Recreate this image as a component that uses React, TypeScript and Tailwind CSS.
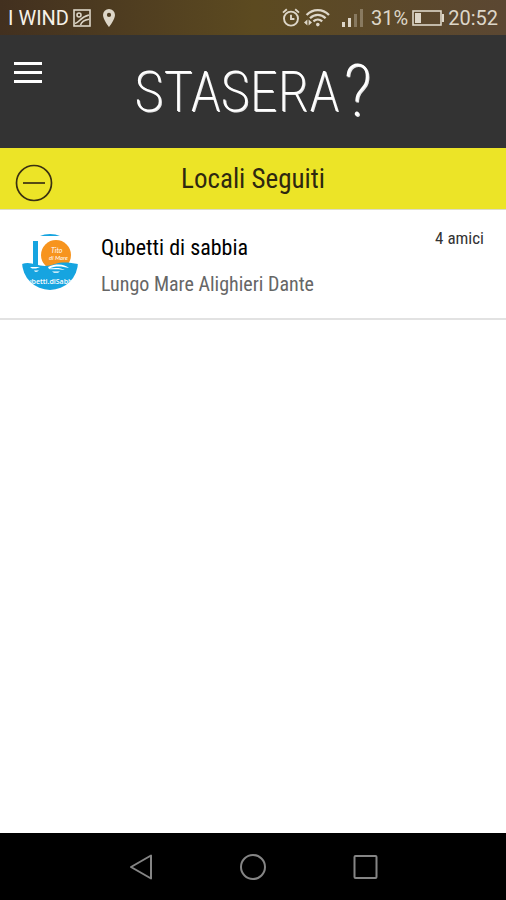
import React from 'react';

interface Venue {
  id: number;
  name: string;
  address: string;
  friends: number;
}

const venues: Venue[] = [
  {
    id: 1,
    name: 'Qubetti di sabbia',
    address: 'Lungo Mare Alighieri Dante',
    friends: 4
  }
];

const PictureIcon = () => (
  <svg width="18" height="18" viewBox="0 0 18 18" fill="none" stroke="currentColor" strokeWidth="1.6" aria-hidden="true">
    <rect x="1" y="1" width="16" height="16" />
    <circle cx="6" cy="6" r="2" />
    <path d="M2 14.5C6 14 7 8 16 6M7.5 16C8.5 13 11.5 10.8 16 10.2" />
  </svg>
);

const PinIcon = () => (
  <svg width="12" height="18" viewBox="0 0 12 18" fill="currentColor" aria-hidden="true">
    <path
      fillRule="evenodd"
      d="M6 0A6 6 0 0 0 0 6C0 10.5 6 18 6 18S12 10.5 12 6A6 6 0 0 0 6 0ZM6 3.8A2.1 2.1 0 1 1 6 8A2.1 2.1 0 0 1 6 3.8Z"
    />
  </svg>
);

const AlarmIcon = () => (
  <svg width="18" height="19" viewBox="0 0 18 19" fill="none" stroke="currentColor" strokeWidth="1.9" aria-hidden="true">
    <circle cx="9" cy="10.6" r="7" />
    <path d="M9 6.8V11H12.4" />
    <path d="M1 4.6L4.8 1.3M17 4.6L13.2 1.3" />
  </svg>
);

const WifiIcon = () => (
  <svg width="26" height="19" viewBox="0 0 26 19" fill="none" stroke="currentColor" aria-hidden="true">
    <path d="M2.6 7C8.8 .4 18.8 .4 25 7" strokeWidth="2.3" />
    <path d="M6 10.2C10.5 5.8 17.1 5.8 21.6 10.2" strokeWidth="2.3" />
    <path d="M9.4 13.3C12 11 15.6 11 18.2 13.3" strokeWidth="2.3" />
    <circle cx="13.8" cy="16.6" r="1.8" fill="currentColor" stroke="none" />
    <path d="M0 14.5L3.4 11.5V17.5ZM8 14.5L4.6 11.5V17.5Z" fill="currentColor" stroke="none" />
  </svg>
);

const SignalIcon = () => (
  <svg width="21" height="18" viewBox="0 0 21 18" fill="currentColor" aria-hidden="true">
    <rect x="0" y="13" width="3" height="5" />
    <rect x="6" y="9" width="3" height="9" />
    <rect x="12" y="5" width="3" height="13" opacity=".35" />
    <rect x="18" y="0" width="3" height="18" opacity=".35" />
  </svg>
);

const BatteryIcon = () => (
  <svg width="32" height="16" viewBox="0 0 32 16" fill="none" aria-hidden="true">
    <rect x="1" y="1" width="28" height="14" stroke="currentColor" strokeWidth="1.6" />
    <rect x="3" y="3" width="6" height="10" fill="currentColor" />
    <rect x="30" y="4" width="2" height="8" fill="currentColor" />
  </svg>
);

const VenueLogo = () => (
  <svg width="56" height="56" viewBox="0 0 56 56" className="shrink-0" role="img" aria-label="Qubetti di Sabbia">
    <defs>
      <clipPath id="venue-disc">
        <circle cx="28" cy="28" r="28" />
      </clipPath>
    </defs>
    <g clipPath="url(#venue-disc)">
      <rect width="56" height="56" fill="#ffffff" />
      <rect width="56" height="2" fill="#16a4e0" />
      <rect x="11" y="7" width="5" height="24" fill="#16a4e0" />
      <circle cx="34" cy="21" r="15" fill="#f7941e" />
      <text x="29" y="19" fill="#ffffff" fontSize="7" className="font-['Lato',sans-serif] italic">Tito</text>
      <text x="27" y="26" fill="#ffffff" fontSize="6" className="font-['Lato',sans-serif] italic">di Mare</text>
      <path d="M0 30C5 28 9 29 14 30.5C20 32.5 27 32.5 33 30C40 27.5 48 28.5 56 30V56H0Z" fill="#16a4e0" />
      <path d="M8 33H18L14 34.5H10ZM26 33C30 31 33 30.5 37 30.5C41 30.5 44 32 47 34C40 32 33 31.5 27 34.5C33 33.5 39 33.5 43 36C37 34.5 31 35.5 27 35Z" fill="#ffffff" />
      <path d="M12 36.5H17L15 37.8H13ZM30 37.5H38L36 38.8H32Z" fill="#ffffff" />
      <text x="28" y="50" textAnchor="middle" fill="#ffffff" fontSize="7" className="font-['Open_Sans',sans-serif] font-semibold">
        Qubetti.diSabbia
      </text>
    </g>
  </svg>
);

const StatusBar = () => (
  <div className="flex h-[35px] items-center justify-between bg-linear-to-r from-[#42301f] via-[#5c4a20] to-[#5b4732] px-2 font-['Roboto',sans-serif] text-[20px] text-[#ddd6c8]">
    <div className="flex items-center">
      <span className="mr-1 text-[#f6f1e8]">I WIND</span>
      <PictureIcon />
      <span className="ml-3">
        <PinIcon />
      </span>
    </div>
    <div className="flex items-center">
      <AlarmIcon />
      <span className="ml-1">
        <WifiIcon />
      </span>
      <span className="ml-3">
        <SignalIcon />
      </span>
      <span className="ml-2">31%</span>
      <span className="mx-1">
        <BatteryIcon />
      </span>
      <span>20:52</span>
    </div>
  </div>
);

// The wordmark gets a second, slightly shifted stroke for its sketched look
const Header = () => (
  <header className="relative flex h-[113px] items-center justify-center bg-[#333333]">
    <button type="button" aria-label="Menu" className="absolute top-[26px] left-[14px] flex w-7 flex-col gap-[6px] py-px">
      <span className="h-[3px] w-full bg-white" />
      <span className="h-[3px] w-full bg-white" />
      <span className="h-[3px] w-full bg-white" />
    </button>
    <h1 className="flex items-center gap-1 font-['Roboto_Condensed','Roboto',sans-serif] text-[56px] leading-none font-extralight text-white [text-shadow:1px_1px_0_#e5e5e5]">
      <span>STASERA</span>
      <span className="text-[72px]">?</span>
    </h1>
  </header>
);

const VenueRow = ({ venue }: { venue: Venue }) => (
  <li className="flex items-start border-b-2 border-[#e2e2e2] px-[22px] py-4">
    <div className="pt-2">
      <VenueLogo />
    </div>
    <div className="ml-[23px] grow pt-1">
      <h3 className="text-[22px] leading-9 text-black">{venue.name}</h3>
      <p className="text-[20px] leading-9 text-[#666666]">{venue.address}</p>
    </div>
    <span className="text-[17px] leading-6 text-[#333333]">{venue.friends} amici</span>
  </li>
);

const NavigationBar = () => (
  <nav className="flex h-[67px] items-center justify-center gap-[84px] bg-black text-[#858585]">
    <button type="button" aria-label="Back">
      <svg width="28" height="28" viewBox="0 0 28 28" fill="none" stroke="currentColor" strokeWidth="2" strokeLinejoin="round">
        <path d="M4 14L24 2.5V25.5Z" />
      </svg>
    </button>
    <button type="button" aria-label="Home">
      <svg width="28" height="28" viewBox="0 0 28 28" fill="none" stroke="currentColor" strokeWidth="2">
        <circle cx="14" cy="14" r="12" />
      </svg>
    </button>
    <button type="button" aria-label="Recent apps">
      <svg width="28" height="28" viewBox="0 0 28 28" fill="none" stroke="currentColor" strokeWidth="2" strokeLinejoin="round">
        <rect x="3.5" y="3" width="22" height="22" rx="1" />
      </svg>
    </button>
  </nav>
);

export default function App() {
  return (
    <div className="flex min-h-screen flex-col bg-white font-['Roboto_Condensed','Roboto',sans-serif]">
      <StatusBar />
      <Header />
      <main className="flex grow flex-col">
        <div className="relative flex h-[62px] items-center justify-center border-b border-[#dcdcc8] bg-[#ece427]">
          <button type="button" aria-label="Smetti di seguire" className="absolute top-4 left-[15px]">
            <svg width="38" height="38" viewBox="0 0 38 38" fill="none" stroke="#3a3011" strokeWidth="1.7">
              <circle cx="19" cy="19" r="17.5" />
              <path d="M8 19H30" />
            </svg>
          </button>
          <h2 className="text-[27px] leading-9 text-[#2e2810]">Locali Seguiti</h2>
        </div>
        <ul>
          {venues.map((venue) => (
            <VenueRow key={venue.id} venue={venue} />
          ))}
        </ul>
      </main>
      <NavigationBar />
    </div>
  );
}
